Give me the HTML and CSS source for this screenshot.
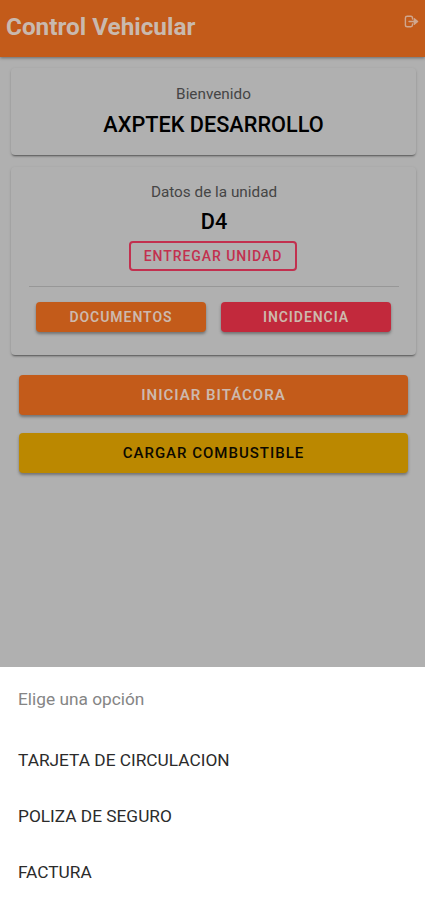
FILE: index.html
```html
<!DOCTYPE html>
<html lang="es">
  <head>
    <meta charset="UTF-8" />
    <meta name="viewport" content="width=device-width, initial-scale=1.0" />
    <title>Control Vehicular</title>
    <link rel="stylesheet" href="styles.css">
  </head>
  <body>
    <div class="header">
      <h1>Control Vehicular</h1>
      <svg class="exit" viewBox="0 0 16 14" width="16" height="14">
        <path d="M8.5 4V3Q8.5 1.3 6.8 1.3H3.2Q1.4 1.3 1.4 3V10Q1.4 11.8 3.2 11.8H6.8Q8.5 11.8 8.5 10.1V9" />
        <path d="M5 6.5H13" />
        <path class="tip" d="M10.3 3.8L13.6 6.5L10.3 9.2Z" />
      </svg>
    </div>

    <div class="content">
      <div class="card welcome">
        <p>Bienvenido</p>
        <h2>AXPTEK DESARROLLO</h2>
      </div>

      <div class="card unit">
        <p>Datos de la unidad</p>
        <h2>D4</h2>
        <button class="btn outline"><span>ENTREGAR UNIDAD</span></button>
        <div class="row">
          <button class="btn orange"><span>DOCUMENTOS</span></button>
          <button class="btn red"><span>INCIDENCIA</span></button>
        </div>
      </div>

      <div class="actions">
        <button class="btn big orange"><span>INICIAR BITÁCORA</span></button>
        <button class="btn big yellow"><span>CARGAR COMBUSTIBLE</span></button>
      </div>
    </div>

    <div class="sheet">
      <p>Elige una opción</p>
      <ul>
        <li>TARJETA DE CIRCULACION</li>
        <li>POLIZA DE SEGURO</li>
        <li>FACTURA</li>
      </ul>
    </div>
  </body>
</html>
```

FILE: styles.css
```css
* {
  margin: 0;
  padding: 0;
  box-sizing: border-box;
}

body {
  display: flex;
  flex-direction: column;
  height: 900px;
  overflow: hidden;
  background-color: #b0b0b0;
  font-family: Roboto, "Liberation Sans", sans-serif;
  color: #000;
}

ul {
  list-style: none;
}

.header {
  display: flex;
  justify-content: space-between;
  height: 57px;
  padding: 13px 5px 0 6px;
  background-color: #c35b1a;
  box-shadow: 0 1px 3px rgba(0, 0, 0, 0.4);
}

.header h1 {
  font-size: 24.3px;
  line-height: 28px;
  font-weight: 700;
  color: #c9b9ae;
}

.exit {
  margin-top: 2px;
  fill: none;
  stroke: #d0a78e;
  stroke-width: 1.4;
  stroke-linecap: round;
  stroke-linejoin: round;
}

.exit .tip {
  fill: #d0a78e;
}

.content {
  flex: 1;
  padding: 11px 9px 0 11px;
}

.card {
  border-radius: 4px;
  text-align: center;
  box-shadow: 0 2px 2px -1px rgba(0, 0, 0, 0.45), 0 1px 3px rgba(0, 0, 0, 0.15);
}

.card p {
  font-size: 15.3px;
  line-height: 20px;
  color: #454545;
}

.card h2 {
  font-size: 21.7px;
  line-height: 26px;
  font-weight: 500;
}

.welcome {
  height: 87px;
  padding-top: 16px;
}

.welcome h2 {
  margin-top: 8px;
}

.unit {
  height: 188px;
  margin-top: 12px;
  padding: 15px 17px 0 18px;
}

.unit h2 {
  margin-top: 7px;
}

.btn {
  height: 30px;
  border: none;
  border-radius: 4px;
  font-family: inherit;
  font-size: 14px;
  line-height: 16px;
  font-weight: 600;
  letter-spacing: 0.95px;
  color: #cdb9ad;
  box-shadow: 0 2px 3px rgba(0, 0, 0, 0.35);
}

.outline {
  display: block;
  width: 168px;
  margin: 6px auto 0 100px;
  border: 2px solid #c2304f;
  background: none;
  font-weight: 500;
  color: #c2304f;
  box-shadow: none;
}

.orange {
  background-color: #c35b1a;
}

.red {
  background-color: #c2293c;
}

.yellow {
  background-color: #bb8800;
  color: #0d0a00;
}

.row {
  display: flex;
  gap: 15px;
  margin-top: 15px;
  padding: 15px 8px 0 7px;
  border-top: 1px solid #979797;
}

.row .btn {
  flex: 1;
}

.actions {
  display: flex;
  flex-direction: column;
  gap: 18px;
  padding: 20px 8px 0 8px;
}

.big {
  height: 40px;
  font-size: 15px;
  letter-spacing: 1px;
}

.big.yellow {
  font-weight: 500;
}

.sheet {
  height: 233px;
  padding: 22px 18px 0;
  background-color: #fff;
  font-size: 17.3px;
}

.sheet p {
  line-height: 20px;
  color: #858585;
}

.sheet ul {
  margin-top: 23px;
}

.sheet li {
  height: 56px;
  line-height: 56px;
  color: #2b2b2b;
}
```
